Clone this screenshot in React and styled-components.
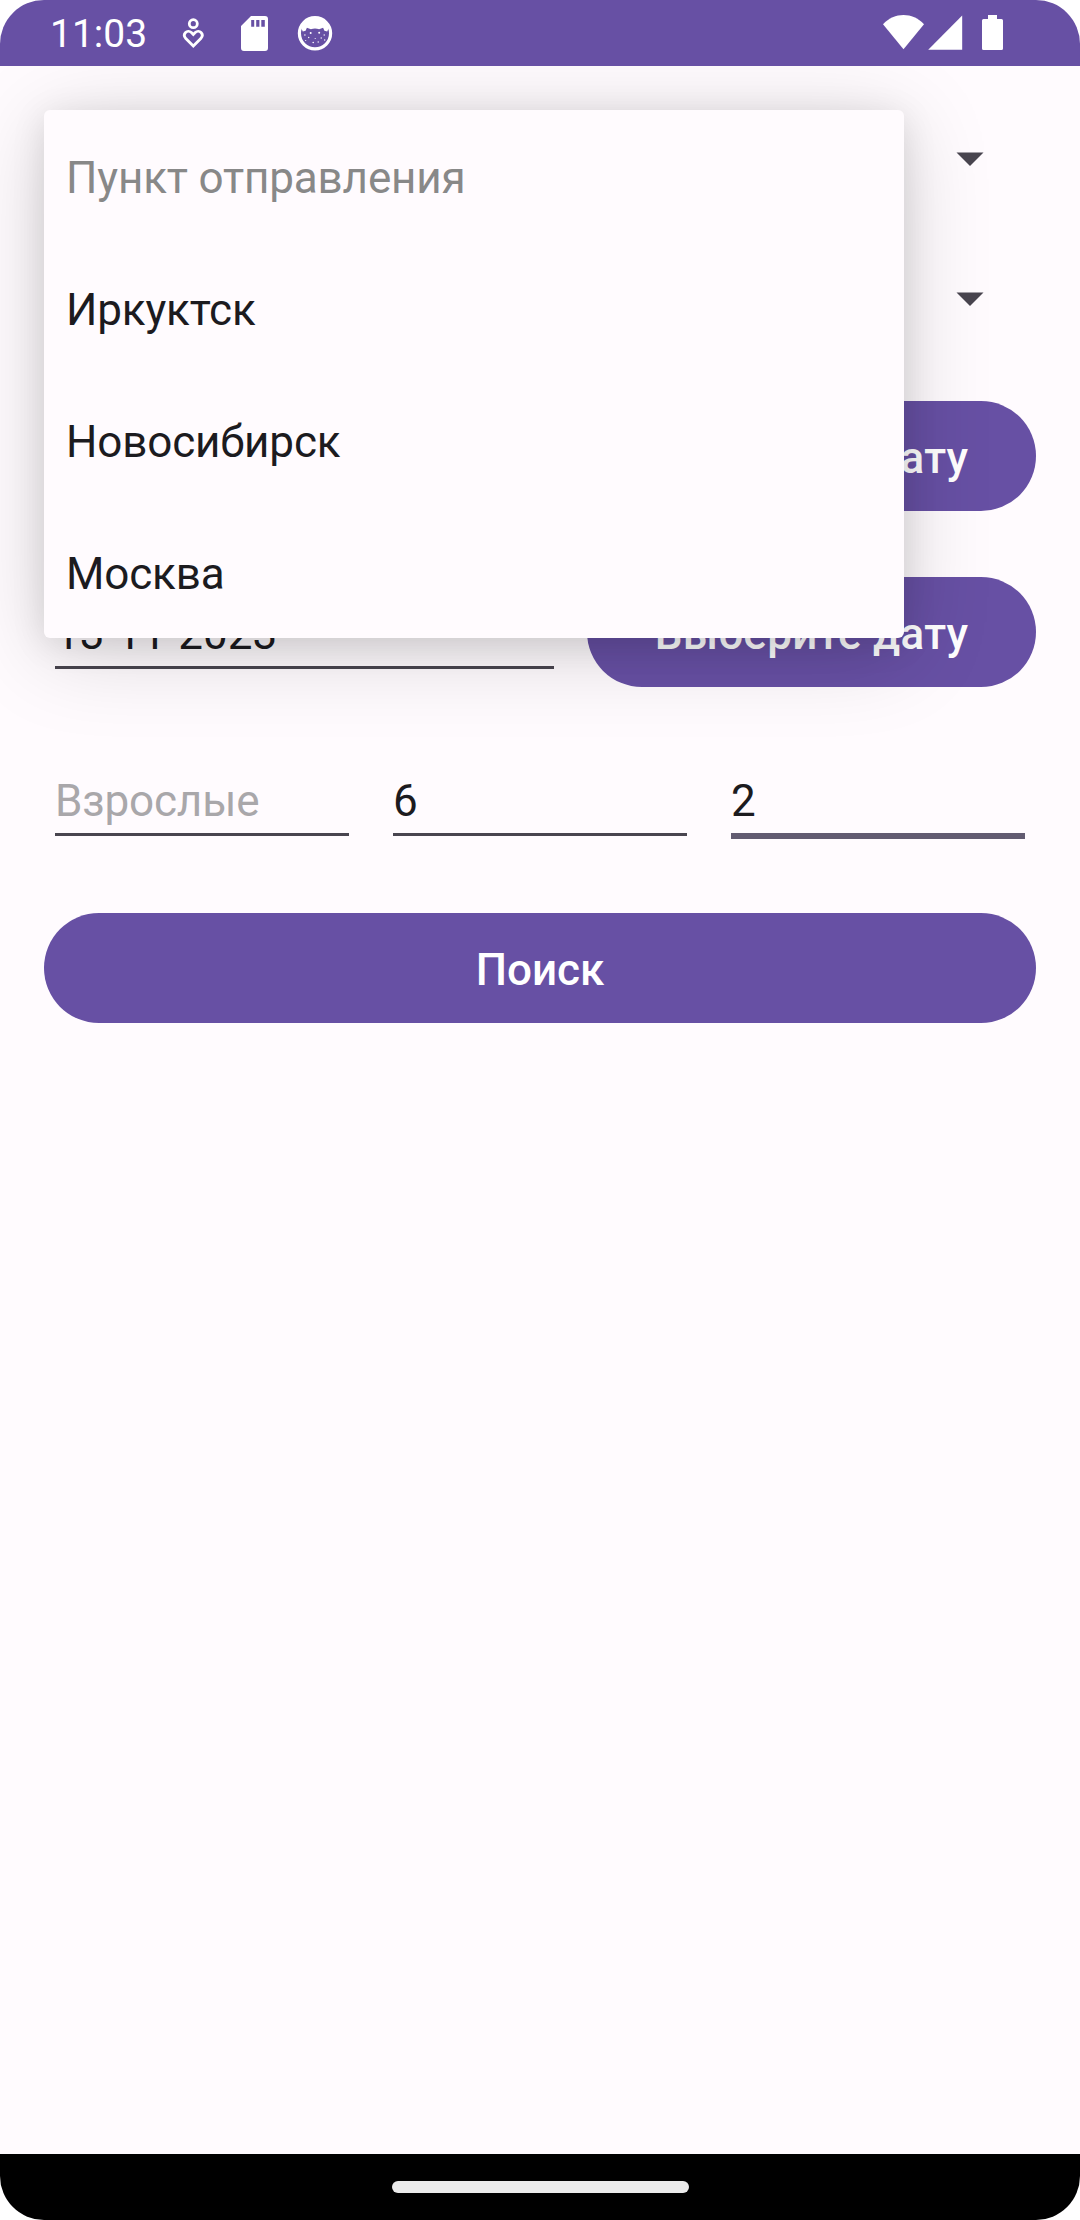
import React from "react";
import styled, { createGlobalStyle } from "styled-components";

const GlobalStyle = createGlobalStyle`
  * { box-sizing: border-box; }
  body { margin: 0; background: #ffffff; }
`;

const Screen = styled.div`
  position: relative;
  display: flex;
  flex-direction: column;
  width: 1080px;
  height: 2220px;
  overflow: hidden;
  border-radius: 44px;
  background: #fffbfe;
  color: #1c1b1f;
  font-family: Roboto, "Noto Sans", sans-serif;
  font-size: 44px;
`;

const StatusBar = styled.header`
  display: flex;
  justify-content: space-between;
  height: 66px;
  padding: 0 76px 0 50px;
  background: #6750a4;
  color: #ffffff;
`;

const StatusGroup = styled.div`
  display: flex;
  align-items: center;
`;

const Clock = styled.span`
  width: 126px;
  font-size: 39px;
  line-height: 66px;
  padding-top: 2px;
`;

const Glyph = styled.svg`
  display: block;
  flex: none;
  width: ${(p) => p.$w}px;
  height: 66px;
  margin-left: ${(p) => p.$gap || 0}px;
`;

const Form = styled.main`
  position: relative;
  flex: 1;
  display: flex;
  flex-direction: column;
  padding: 27px 44px 0;
  overflow: hidden;
`;

const SpinnerRow = styled.div`
  display: flex;
  align-items: center;
  justify-content: flex-end;
  height: 132px;
  margin-bottom: 8px;
  padding-right: 52px;
`;

const Caret = styled.svg`
  display: block;
  width: 28px;
  height: 14px;
`;

const DateRow = styled.div`
  display: flex;
  align-items: flex-start;
  gap: 22px;
  height: 110px;
  margin-top: ${(p) => p.$top}px;
`;

const PassengerRow = styled.div`
  display: grid;
  grid-template-columns: repeat(3, 1fr);
  gap: 22px;
  height: 96px;
  margin-top: 66px;
`;

const Field = styled.div`
  flex: 1;
  height: ${(p) => (p.$focused ? 86 : 83)}px;
  margin: ${(p) => p.$top || 0}px 11px 0;
  padding-top: 22px;
  line-height: 52px;
  white-space: nowrap;
  border-bottom: ${(p) => (p.$focused ? "6px solid #625b71" : "3px solid #49454f")};
  color: ${(p) => (p.$hint ? "#a9a7aa" : "#1c1b1f")};
  letter-spacing: ${(p) => (p.$hint ? "-0.15px" : "normal")};
`;

const Button = styled.button`
  flex: none;
  width: ${(p) => p.$width || "100%"};
  height: 110px;
  margin: ${(p) => p.$top || 0}px 0 0;
  padding: 3px 0 0;
  border: 0;
  border-radius: 55px;
  background: #6750a4;
  color: #ffffff;
  font: 500 44px/52px Roboto, "Noto Sans", sans-serif;
  letter-spacing: ${(p) => (p.$width ? "0.25px" : "normal")};
`;

const Dropdown = styled.ul`
  position: absolute;
  top: 44px;
  left: 44px;
  width: 860px;
  margin: 0;
  padding: 0;
  list-style: none;
  border-radius: 6px;
  background: #fffbfe;
  box-shadow: 0 14px 88px rgba(0, 0, 0, 0.17), 0 6px 34px rgba(0, 0, 0, 0.1);
`;

const Option = styled.li`
  display: flex;
  align-items: center;
  height: 132px;
  padding: 3px 22px 0;
  line-height: 52px;
  letter-spacing: -0.15px;
  color: ${(p) => (p.$disabled ? "#888888" : "#1c1b1f")};
`;

const NavigationBar = styled.footer`
  display: flex;
  align-items: center;
  justify-content: center;
  height: 66px;
  background: #000000;
`;

const HomeHandle = styled.div`
  width: 297px;
  height: 12px;
  border-radius: 6px;
  background: #ebebeb;
`;

const options = ["Пункт отправления", "Иркуктск", "Новосибирск", "Москва"];

function DropdownCaret() {
  return (
    <Caret viewBox="0 0 28 14">
      <path d="M0.5 0.4h27L14 14z" fill="#49454f" />
    </Caret>
  );
}

function CareIcon() {
  return (
    <Glyph $w={24} $gap={5} viewBox="181 0 24 66" fill="none" stroke="#fff" strokeWidth="2.8">
      <circle cx="193.3" cy="23.7" r="4" />
      <path d="M193.3 46l-7.5-7.4c-4-4.3 1.5-9.8 5.6-6.1l1.9 1.9 1.9-1.9c4.1-3.7 9.6 1.8 5.6 6.1z" />
    </Glyph>
  );
}

function SdCardIcon() {
  return (
    <Glyph $w={27} $gap={36} viewBox="241 0 27 66">
      <path
        fill="#fff"
        fillRule="evenodd"
        d="M251 16h14a3 3 0 0 1 3 3v29a3 3 0 0 1-3 3h-21a3 3 0 0 1-3-3V26zM251.2 20v6.7h3V20zm5 0v6.7h3.2V20zm5.1 0v6.7h3.5V20z"
      />
    </Glyph>
  );
}

function CatIcon() {
  return (
    <Glyph $w={36} $gap={29.3} viewBox="297.3 0 36 66">
      <circle cx="315.3" cy="33.3" r="15.6" fill="none" stroke="#fff" strokeWidth="3.2" />
      <path
        fill="#fff"
        d="M301.500 28c3-14.500 24.600-14.500 27.600 0l-1.600 3.500-2.800-.8-1.300-3-4 1.600c-2.700-1-5.500-1-8.200 0l-4-1.600-1.300 3-2.800.8z"
      />
      <g fill="#fff">
        <circle cx="311" cy="33" r="1" />
        <circle cx="319.500" cy="32.700" r="1" />
        <circle cx="305.200" cy="35" r="0.700" />
        <circle cx="309" cy="37.500" r="0.700" />
        <circle cx="324.500" cy="35" r="0.700" />
        <circle cx="321.500" cy="38" r="0.700" />
        <circle cx="306" cy="40.500" r="0.600" />
        <circle cx="325" cy="40" r="0.700" />
        <circle cx="313.500" cy="42.500" r="0.800" />
        <circle cx="318.500" cy="42" r="0.700" />
        <circle cx="315.500" cy="38.500" r="0.600" />
      </g>
    </Glyph>
  );
}

function WifiIcon() {
  return (
    <Glyph $w={42} viewBox="883 0 42 66">
      <path fill="#fff" d="M903.500 49.300L883 24.300c11.500-12.300 29.500-12.300 41 0z" />
    </Glyph>
  );
}

function SignalIcon() {
  return (
    <Glyph $w={35} $gap={2.5} viewBox="927.500 0 35 66">
      <path fill="#fff" d="M927.700 49.700L961.700 15.500v34.200z" />
    </Glyph>
  );
}

function BatteryIcon() {
  return (
    <Glyph $w={22} $gap={19.5} viewBox="982 0 22 66">
      <path
        fill="#fff"
        d="M988 15h9v4h4.500a1.500 1.500 0 0 1 1.500 1.500v28a1.500 1.500 0 0 1-1.500 1.500h-18a1.500 1.500 0 0 1-1.500-1.500v-28a1.500 1.500 0 0 1 1.500-1.500h4.500z"
      />
    </Glyph>
  );
}

export default function App() {
  return (
    <>
      <GlobalStyle />
      <Screen>
        <StatusBar>
          <StatusGroup>
            <Clock>11:03</Clock>
            <CareIcon />
            <SdCardIcon />
            <CatIcon />
          </StatusGroup>
          <StatusGroup>
            <WifiIcon />
            <SignalIcon />
            <BatteryIcon />
          </StatusGroup>
        </StatusBar>
        <Form>
          <SpinnerRow>
            <DropdownCaret />
          </SpinnerRow>
          <SpinnerRow>
            <DropdownCaret />
          </SpinnerRow>
          <DateRow $top={28}>
            <Field $top={9} />
            <Button $width="449px">Выберите дату</Button>
          </DateRow>
          <DateRow $top={66}>
            <Field $top={9}>13-11-2023</Field>
            <Button $width="449px">Выберите дату</Button>
          </DateRow>
          <PassengerRow>
            <Field $hint>Взрослые</Field>
            <Field>6</Field>
            <Field $focused>2</Field>
          </PassengerRow>
          <Button $top={64}>Поиск</Button>
          <Dropdown>
            {options.map((label, i) => (
              <Option key={label} $disabled={i === 0}>
                {label}
              </Option>
            ))}
          </Dropdown>
        </Form>
        <NavigationBar>
          <HomeHandle />
        </NavigationBar>
      </Screen>
    </>
  );
}
